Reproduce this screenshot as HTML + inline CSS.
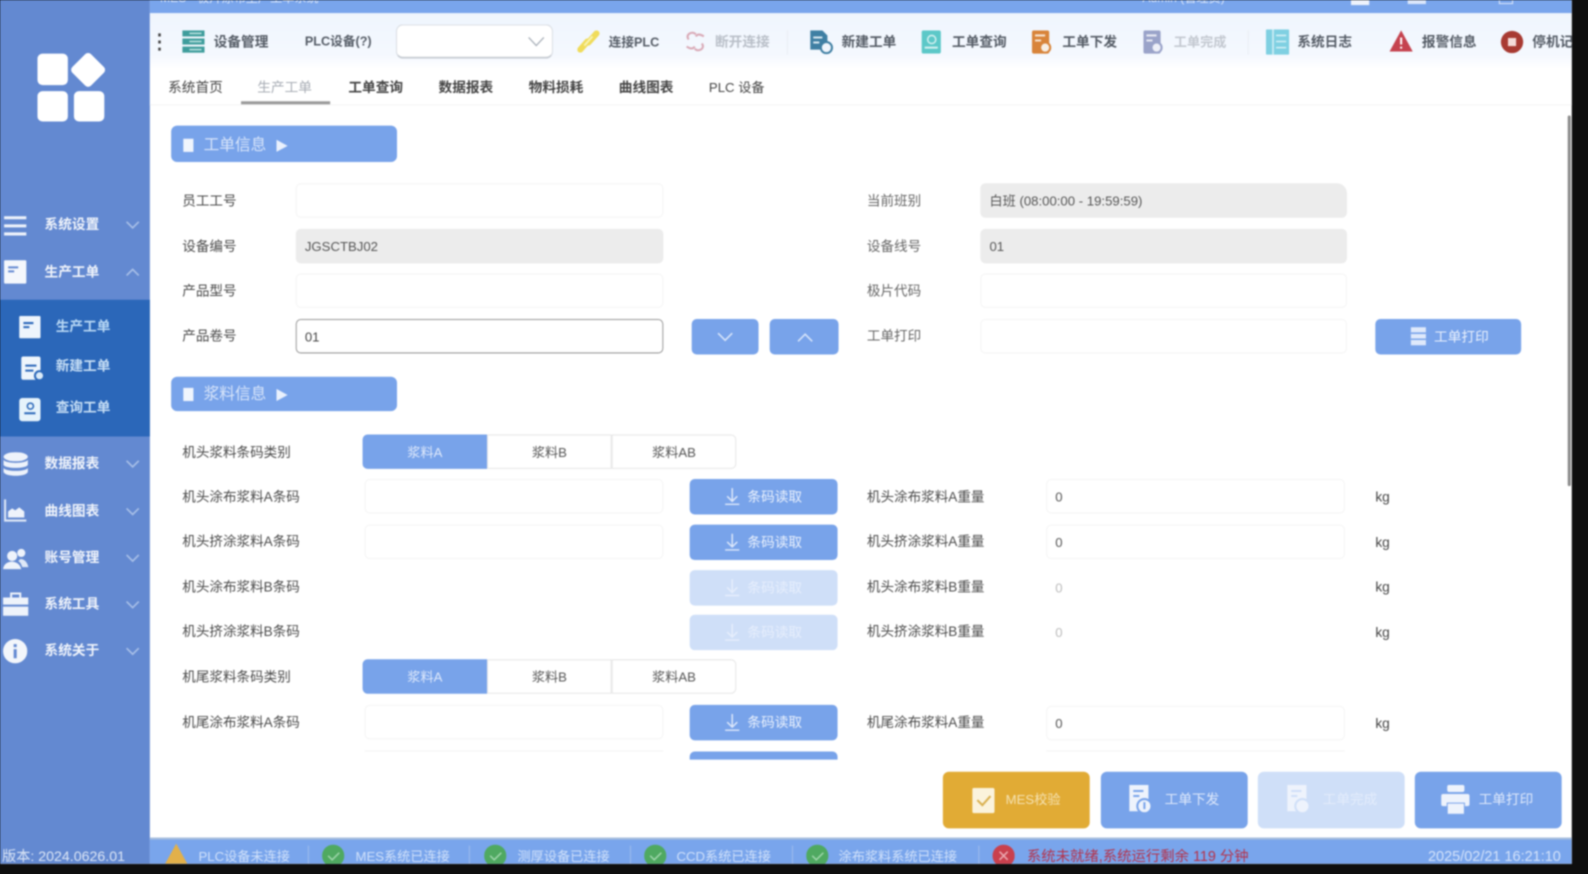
<!DOCTYPE html>
<html lang="zh"><head><meta charset="utf-8"><title>生产工单</title>
<style>
html,body{margin:0;padding:0;width:1588px;height:874px;overflow:hidden;background:#0e0e0e}
#s{position:absolute;left:0;top:0;width:1552px;height:853px;background:#fff;overflow:hidden;transform-origin:0 0;transform:scale(1.01275);font-family:"Liberation Sans","Noto Sans CJK SC",sans-serif;font-size:13.500px;color:#444;filter:blur(.75px)}
#s div,#s svg{position:absolute;box-sizing:border-box}
.t{white-space:nowrap;line-height:18px;height:18px}
.ip{border:1px solid #f4f4f4;border-radius:5px;background:#fff;height:34px;padding-left:8px;line-height:34px;color:#555;font-size:13px}
.g{background:#ececec;border-color:#ececec}
.b{background:#78a3ea;border-radius:5px;color:#eaf1fd;text-align:center;line-height:36px;height:35px}
.l{background:#cfdff8;color:#e6eefc}
.sg{height:34px;width:123px;border:1px solid #e6e6e6;text-align:center;line-height:34px;color:#555;background:#fff;font-size:13px}
.m{font-weight:700;color:#f0f4fb;font-size:13.500px}
.ar{fill:none;stroke:#a9c0e8;stroke-width:1.6}
.tb{font-weight:700;color:#555c66;font-size:13.500px}
.st{color:#cfe0fa;font-size:13px}
.bb{height:56px;width:145px;top:762px;border-radius:6px;background:#78a3ea;color:#dfe9fb}
.la{font-size:13.400px;color:#4a4a4a}
</style></head><body><div id="s">

<!-- sidebar -->
<div style="left:0;top:0;width:148px;height:853px;background:#6389d1"></div>
<div style="left:37px;top:53px;width:30px;height:31px;background:#fff;border-radius:5px"></div>
<div style="left:74px;top:56px;width:26px;height:26px;background:#fff;border-radius:4px;transform:rotate(45deg)"></div>
<div style="left:37px;top:90px;width:30px;height:30px;background:#fff;border-radius:5px"></div>
<div style="left:73px;top:90px;width:30px;height:30px;background:#fff;border-radius:5px"></div>

<div style="left:0;top:296px;width:148px;height:135px;background:#2b67b9"></div>

<svg style="left:4px;top:212px" width="24" height="22"><path d="M0 3h22M0 11h22M0 19h22" stroke="#eef3fb" stroke-width="3"/></svg>
<div class="t m" style="left:44px;top:213px">系统设置</div>
<svg style="left:124px;top:218px" width="14" height="9"><path class="ar" d="M1 1l6 6 6-6"/></svg>

<div style="left:4px;top:257px;width:22px;height:23px;background:#f4f7fc;border-radius:1px"></div>
<svg style="left:8px;top:262px" width="12" height="10"><path d="M0 2h10M0 6h6" stroke="#6389d1" stroke-width="2"/></svg>
<div class="t m" style="left:44px;top:260px">生产工单</div>
<svg style="left:124px;top:264px" width="14" height="9"><path class="ar" d="M1 8l6-6 6 6"/></svg>

<div style="left:19px;top:312px;width:21px;height:22px;background:#eef5fc;border-radius:1px"></div>
<svg style="left:23px;top:317px" width="12" height="10"><path d="M0 2h10M0 6h6" stroke="#2b67b9" stroke-width="2"/></svg>
<div class="t" style="left:55px;top:314px;color:#b8d8f5;font-weight:700">生产工单</div>

<div style="left:21px;top:352px;width:19px;height:23px;background:#eef5fc;border-radius:2px"></div>
<svg style="left:24px;top:356px" width="24" height="22"><path d="M1 5h11M1 10h8" stroke="#2b67b9" stroke-width="2"/><circle cx="15" cy="15" r="5.500" fill="#2b67b9"/><circle cx="15" cy="15" r="3.500" fill="#dcebf8"/></svg>
<div class="t" style="left:55px;top:353px;color:#c6def5;font-weight:700">新建工单</div>

<div style="left:19px;top:393px;width:21px;height:23px;background:#e6f3fb;border-radius:3px"></div>
<svg style="left:22px;top:396px" width="15" height="17"><circle cx="8" cy="5" r="3" fill="none" stroke="#2b67b9" stroke-width="1.500"/><path d="M2 12h11" stroke="#2b67b9" stroke-width="2"/></svg>
<div class="t" style="left:55px;top:394px;color:#c6def5;font-weight:700">查询工单</div>

<svg style="left:3px;top:446px" width="25" height="25"><ellipse cx="12.500" cy="5" rx="12" ry="4.500" fill="#eef3fb"/><path d="M.5 8c2 4 22 4 24 0v5c-2 4-22 4-24 0z" fill="#eef3fb"/><path d="M.5 16c2 4 22 4 24 0v4c-2 5-22 5-24 0z" fill="#eef3fb"/></svg>
<div class="t m" style="left:44px;top:449px">数据报表</div>
<svg style="left:124px;top:454px" width="14" height="9"><path class="ar" d="M1 1l6 6 6-6"/></svg>

<svg style="left:4px;top:493px" width="23" height="24"><path d="M1 0v21h21" fill="none" stroke="#dfe8f7" stroke-width="2"/><path d="M4 18v-6l4-3 3 2 4-3 5 4v6z" fill="#eef3fb"/></svg>
<div class="t m" style="left:44px;top:496px">曲线图表</div>
<svg style="left:124px;top:501px" width="14" height="9"><path class="ar" d="M1 1l6 6 6-6"/></svg>

<svg style="left:3px;top:540px" width="26" height="24"><circle cx="9" cy="9" r="5" fill="#eef3fb"/><circle cx="18" cy="6" r="4" fill="#eef3fb"/><path d="M0 22c1-10 16-10 18 0z" fill="#eef3fb"/><path d="M17 12c4 0 7 3 8 8h-6c-1-3-2-5-4-6z" fill="#dfe8f7"/></svg>
<div class="t m" style="left:44px;top:542px">账号管理</div>
<svg style="left:124px;top:547px" width="14" height="9"><path class="ar" d="M1 1l6 6 6-6"/></svg>

<svg style="left:3px;top:585px" width="25" height="24"><path d="M8 5V1h9v4" fill="none" stroke="#eef3fb" stroke-width="2"/><rect x="0" y="5" width="25" height="7" fill="#eef3fb"/><rect x="0" y="14" width="25" height="9" fill="#eef3fb"/></svg>
<div class="t m" style="left:44px;top:588px">系统工具</div>
<svg style="left:124px;top:593px" width="14" height="9"><path class="ar" d="M1 1l6 6 6-6"/></svg>

<svg style="left:3px;top:631px" width="24" height="24"><circle cx="12" cy="12" r="12" fill="#f3f6fb"/><path d="M12 5v3M12 10v9" stroke="#6389d1" stroke-width="3"/></svg>
<div class="t m" style="left:44px;top:634px">系统关于</div>
<svg style="left:124px;top:639px" width="14" height="9"><path class="ar" d="M1 1l6 6 6-6"/></svg>

<div class="t" style="left:2px;top:836px;font-size:14px;color:#dce6f6">版本: 2024.0626.01</div>

<!-- title bar -->
<div style="left:148px;top:0;width:1404px;height:13px;background:#79a5ec"></div>
<div class="t" style="left:158px;top:-11px;font-size:12px;color:#dde8fb">MES - 极片涂布生产工单系统</div>
<div class="t" style="left:1128px;top:-11px;font-size:12px;color:#dde8fb">Admin (管理员)</div>
<div style="left:1334px;top:0;width:18px;height:5px;background:#eef3fc"></div>
<div style="left:1390px;top:0;width:18px;height:4px;background:#dbe7fb"></div>
<div style="left:1480px;top:0;width:14px;height:4px;border:1px solid #dbe7fb;border-top:0"></div>

<!-- toolbar -->
<div style="left:148px;top:13px;width:1404px;height:55px;background:linear-gradient(#eff5fd,#f4f8fe 75%,#fff)"></div>
<svg style="left:155px;top:32px" width="5" height="19"><path d="M2.500 1v3M2.500 8v3M2.500 15v3" stroke="#444" stroke-width="2.500"/></svg>
<svg style="left:180px;top:30px" width="22" height="23"><rect width="22" height="6" fill="#3f9d9c"/><rect y="8" width="22" height="6" fill="#3f9d9c"/><rect y="16" width="22" height="6" fill="#3f9d9c"/><path d="M7 3h12M7 11h12M7 19h12" stroke="#bfe4e2" stroke-width="1.500"/></svg>
<div class="t tb" style="left:211px;top:33px">设备管理</div>
<div class="t tb" style="left:301px;top:32px;font-size:12.500px">PLC设备(?)</div>
<div style="left:391px;top:24px;width:155px;height:34px;border:1px solid #d9dde3;border-bottom:2px solid #c7ccd3;border-radius:7px;background:#fff"></div>
<svg style="left:521px;top:36px" width="17" height="11"><path d="M1 1l7.500 8L16 1" fill="none" stroke="#aab1ba" stroke-width="1.300"/></svg>
<svg style="left:570px;top:30px" width="23" height="22"><path d="M3 19l7-8M11 12l8-9" stroke="#f0dc5a" stroke-width="6" stroke-linecap="round"/><path d="M7 15l8-9" stroke="#f8f2b0" stroke-width="2"/></svg>
<div class="t tb" style="left:601px;top:33px;font-size:12.500px">连接PLC</div>
<svg style="left:676px;top:30px" width="21" height="22"><path d="M4 9c-4-5 4-9 7-5M17 13c4 5-4 9-7 5M2 16c3 2 6 3 8 0M19 6c-3-2-6-3-8 0" fill="none" stroke="#d9a9b6" stroke-width="2"/></svg>
<div class="t" style="left:706px;top:33px;font-size:13.500px;color:#b9bfc8;font-weight:700">断开连接</div>
<div style="left:777px;top:30px;width:1px;height:24px;background:#eaeef3"></div>
<svg style="left:800px;top:30px" width="24" height="24"><path d="M0 0h12l5 5v14H0z" fill="#3f7fa3"/><path d="M3 7h9M3 12h6" stroke="#d8e8f2" stroke-width="2"/><circle cx="16" cy="17" r="5.500" fill="#f0f5fc" stroke="#3f7fa3" stroke-width="2"/></svg>
<div class="t tb" style="left:831px;top:33px">新建工单</div>
<svg style="left:910px;top:30px" width="20" height="23"><rect width="19" height="23" rx="2" fill="#5cc8c8"/><circle cx="10" cy="9" r="4" fill="none" stroke="#d5f1f1" stroke-width="1.500"/><path d="M3 17h13" stroke="#d5f1f1" stroke-width="2"/></svg>
<div class="t tb" style="left:940px;top:33px">工单查询</div>
<svg style="left:1019px;top:30px" width="21" height="24"><rect width="17" height="23" rx="2" fill="#d8843a"/><path d="M3 5h10M3 10h6" stroke="#f7e3cf" stroke-width="2"/><circle cx="13" cy="17" r="5" fill="#f7efe6" stroke="#d8843a" stroke-width="2"/></svg>
<div class="t tb" style="left:1049px;top:33px">工单下发</div>
<svg style="left:1129px;top:30px" width="21" height="24"><rect width="17" height="23" rx="2" fill="#9aa3c9"/><path d="M3 5h10M3 10h6" stroke="#e8eaf4" stroke-width="2"/><circle cx="13" cy="17" r="5" fill="#eef0f8" stroke="#9aa3c9" stroke-width="2"/></svg>
<div class="t" style="left:1159px;top:33px;color:#c3c8d0;font-weight:700;font-size:13px">工单完成</div>
<div style="left:1232px;top:30px;width:1px;height:24px;background:#eaeef3"></div>
<svg style="left:1250px;top:29px" width="23" height="25"><rect width="23" height="25" rx="1" fill="#7fd0e2"/><path d="M7 0v25M10 6h10M10 12h10M10 18h10" stroke="#d6f0f6" stroke-width="1.500"/></svg>
<div class="t tb" style="left:1281px;top:33px">系统日志</div>
<svg style="left:1372px;top:30px" width="23" height="21"><path d="M11.500 0L23 21H0z" fill="#c5434f"/><path d="M11.500 7v7M11.500 16v2" stroke="#fff" stroke-width="2"/></svg>
<div class="t tb" style="left:1404px;top:33px">报警信息</div>
<svg style="left:1481px;top:29px" width="24" height="25"><circle cx="12" cy="12.500" r="11" fill="#a83a32"/><rect x="8" y="8.500" width="8" height="8" fill="#f4dbd8"/></svg>
<div class="t tb" style="left:1513px;top:33px">停机记录</div>

<!-- tabs -->
<div style="left:148px;top:68px;width:1404px;height:36px;background:#fff;border-bottom:1px solid #f3f3f3"></div>
<div class="t" style="left:166px;top:78px">系统首页</div>
<div class="t" style="left:254px;top:78px;color:#a8adb5">生产工单</div>
<div style="left:238px;top:100px;width:88px;height:2.500px;background:#9a9a9a"></div>
<div class="t" style="left:344px;top:78px;font-weight:700">工单查询</div>
<div class="t" style="left:433px;top:78px;font-weight:700">数据报表</div>
<div class="t" style="left:522px;top:78px;font-weight:700">物料损耗</div>
<div class="t" style="left:611px;top:78px;font-weight:700">曲线图表</div>
<div class="t" style="left:700px;top:78px;font-size:13px">PLC 设备</div>

<!-- scrollbar -->
<div style="left:1548px;top:114px;width:3px;height:366px;background:#8a8a8a;border-radius:2px"></div>

<!-- section 1 -->
<div style="left:169px;top:124px;width:223px;height:36px;background:#78a3ea;border-radius:6px"></div>
<div style="left:181px;top:137px;width:10px;height:13px;background:#f0f5fd"></div>
<div class="t" style="left:201px;top:135px;font-size:15.500px;color:#d8e5fa">工单信息</div>
<svg style="left:273px;top:138px" width="12" height="12"><path d="M0 0l11 6-11 6z" fill="#eaf1fd"/></svg>

<div class="t la" style="left:180px;top:190px">员工工号</div><div class="ip" style="left:292px;top:181px;width:363px"></div>
<div class="t la" style="left:180px;top:235px">设备编号</div><div class="ip g" style="left:292px;top:226px;width:363px">JGSCTBJ02</div>
<div class="t la" style="left:180px;top:279px">产品型号</div><div class="ip" style="left:292px;top:270px;width:363px"></div>
<div class="t la" style="left:180px;top:323px">产品卷号</div><div class="ip" style="left:292px;top:315px;width:363px;border-color:#9a9a9a;color:#444">01</div>
<div class="b" style="left:683px;top:315px;width:66px"></div>
<svg style="left:708px;top:328px" width="16" height="10"><path d="M1 1l7 7 7-7" fill="none" stroke="#d8e5fa" stroke-width="1.500"/></svg>
<div class="b" style="left:760px;top:315px;width:68px"></div>
<svg style="left:787px;top:328px" width="16" height="10"><path d="M1 9l7-7 7 7" fill="none" stroke="#d8e5fa" stroke-width="1.500"/></svg>

<div class="t la" style="left:856px;top:190px;color:#666">当前班别</div><div class="ip g" style="left:968px;top:181px;width:362px;border-top-right-radius:10px">白班 (08:00:00 - 19:59:59)</div>
<div class="t la" style="left:856px;top:235px;color:#666">设备线号</div><div class="ip g" style="left:968px;top:226px;width:362px">01</div>
<div class="t la" style="left:856px;top:279px;color:#666">极片代码</div><div class="ip" style="left:968px;top:270px;width:362px"></div>
<div class="t la" style="left:856px;top:323px;color:#666">工单打印</div><div class="ip" style="left:968px;top:315px;width:362px"></div>
<div class="b" style="left:1358px;top:315px;width:144px;padding-left:26px">工单打印</div>
<svg style="left:1393px;top:323px" width="15" height="18"><rect width="15" height="18" fill="#dfe9fb"/><path d="M0 6h15M0 12h15" stroke="#78a3ea" stroke-width="1.500"/></svg>

<!-- section 2 -->
<div style="left:169px;top:372px;width:223px;height:34px;background:#78a3ea;border-radius:6px"></div>
<div style="left:181px;top:383px;width:10px;height:13px;background:#f0f5fd"></div>
<div class="t" style="left:201px;top:381px;font-size:15.500px;color:#d8e5fa">浆料信息</div>
<svg style="left:273px;top:384px" width="12" height="12"><path d="M0 0l11 6-11 6z" fill="#eaf1fd"/></svg>

<div class="t la" style="left:180px;top:438px">机头浆料条码类别</div>
<div class="sg" style="left:358px;top:429px;background:#78a3ea;border-color:#78a3ea;color:#dfe9fb;border-radius:5px 0 0 5px">浆料A</div>
<div class="sg" style="left:481px;top:429px">浆料B</div>
<div class="sg" style="left:604px;top:429px;border-radius:0 5px 5px 0">浆料AB</div>

<div class="t la" style="left:180px;top:482px">机头涂布浆料A条码</div><div class="ip" style="left:360px;top:473px;width:295px"></div>
<div class="b" style="left:681px;top:473px;width:146px;padding-left:22px">条码读取</div>
<div class="t la" style="left:180px;top:526px">机头挤涂浆料A条码</div><div class="ip" style="left:360px;top:518px;width:295px"></div>
<div class="b" style="left:681px;top:518px;width:146px;padding-left:22px">条码读取</div>
<div class="t la" style="left:180px;top:571px">机头涂布浆料B条码</div>
<div class="b l" style="left:681px;top:563px;width:146px;padding-left:22px">条码读取</div>
<div class="t la" style="left:180px;top:615px">机头挤涂浆料B条码</div>
<div class="b l" style="left:681px;top:607px;width:146px;padding-left:22px">条码读取</div>

<div class="t la" style="left:180px;top:660px">机尾浆料条码类别</div>
<div class="sg" style="left:358px;top:651px;background:#78a3ea;border-color:#78a3ea;color:#dfe9fb;border-radius:5px 0 0 5px">浆料A</div>
<div class="sg" style="left:481px;top:651px">浆料B</div>
<div class="sg" style="left:604px;top:651px;border-radius:0 5px 5px 0">浆料AB</div>

<div class="t la" style="left:180px;top:705px">机尾涂布浆料A条码</div><div class="ip" style="left:360px;top:696px;width:295px"></div>
<div class="b" style="left:681px;top:696px;width:146px;padding-left:22px">条码读取</div>
<div style="left:360px;top:741px;width:295px;height:9px;border-top:1px solid #f4f4f4"></div>
<div style="left:681px;top:742px;width:146px;height:8px;background:#78a3ea;border-radius:5px 5px 0 0"></div>

<svg style="left:715px;top:481px" width="16" height="19"><path d="M8 1v13M3 9l5 5 5-5M1 17h14" fill="none" stroke="#dfe9fb" stroke-width="1.400"/></svg>
<svg style="left:715px;top:526px" width="16" height="19"><path d="M8 1v13M3 9l5 5 5-5M1 17h14" fill="none" stroke="#dfe9fb" stroke-width="1.400"/></svg>
<svg style="left:715px;top:571px" width="16" height="19"><path d="M8 1v13M3 9l5 5 5-5M1 17h14" fill="none" stroke="#e6eefc" stroke-width="1.400"/></svg>
<svg style="left:715px;top:615px" width="16" height="19"><path d="M8 1v13M3 9l5 5 5-5M1 17h14" fill="none" stroke="#e6eefc" stroke-width="1.400"/></svg>
<svg style="left:715px;top:704px" width="16" height="19"><path d="M8 1v13M3 9l5 5 5-5M1 17h14" fill="none" stroke="#dfe9fb" stroke-width="1.400"/></svg>

<div class="t la" style="left:856px;top:482px">机头涂布浆料A重量</div><div class="ip" style="left:1033px;top:473px;width:295px">0</div><div class="t" style="left:1358px;top:482px">kg</div>
<div class="t la" style="left:856px;top:526px">机头挤涂浆料A重量</div><div class="ip" style="left:1033px;top:518px;width:295px">0</div><div class="t" style="left:1358px;top:527px">kg</div>
<div class="t la" style="left:856px;top:571px">机头涂布浆料B重量</div><div class="ip" style="left:1033px;top:563px;width:295px;border-color:#fff;color:#bbb">0</div><div class="t" style="left:1358px;top:571px">kg</div>
<div class="t la" style="left:856px;top:615px">机头挤涂浆料B重量</div><div class="ip" style="left:1033px;top:607px;width:295px;border-color:#fff;color:#bbb">0</div><div class="t" style="left:1358px;top:616px">kg</div>
<div class="t la" style="left:856px;top:705px">机尾涂布浆料A重量</div><div class="ip" style="left:1033px;top:697px;width:295px">0</div><div class="t" style="left:1358px;top:706px">kg</div>
<div style="left:1033px;top:741px;width:295px;height:1px;background:#f4f4f4"></div>

<!-- bottom buttons -->
<div class="bb" style="left:931px;background:#e1ab35;color:#f7e6bd"></div>
<svg style="left:960px;top:778px" width="23" height="25"><rect width="22" height="25" rx="2" fill="#fbf3dc"/><path d="M5 12l5 5 8-9" fill="none" stroke="#d9b04f" stroke-width="2"/></svg>
<div class="t" style="left:993px;top:781px;color:#f5e2b2;font-size:13px">MES校验</div>
<div class="bb" style="left:1087px"></div>
<svg style="left:1115px;top:775px" width="25" height="30"><path d="M0 0h19v26H0z" fill="#eef3fc"/><path d="M4 6h10M4 11h6" stroke="#78a3ea" stroke-width="2"/><circle cx="15" cy="21" r="7" fill="#eef3fc" stroke="#78a3ea" stroke-width="2"/><path d="M15 17v7" stroke="#78a3ea" stroke-width="2"/></svg>
<div class="t" style="left:1150px;top:781px;color:#dfe9fb">工单下发</div>
<div class="bb" style="left:1242px;background:#cfdff8"></div>
<svg style="left:1271px;top:775px" width="25" height="30"><path d="M0 0h19v26H0z" fill="#eef3fc"/><path d="M4 6h10M4 11h6" stroke="#cfdff8" stroke-width="2"/><circle cx="15" cy="21" r="7" fill="#eef3fc" stroke="#cfdff8" stroke-width="2"/></svg>
<div class="t" style="left:1306px;top:781px;color:#e3ecfb">工单完成</div>
<div class="bb" style="left:1397px"></div>
<svg style="left:1423px;top:775px" width="29" height="29"><rect x="6" y="0" width="17" height="7" rx="2" fill="#eef3fc"/><rect x="0" y="9" width="28" height="12" rx="2" fill="#eef3fc"/><rect x="6" y="18" width="17" height="11" fill="#eef3fc" stroke="#78a3ea"/></svg>
<div class="t" style="left:1460px;top:781px;color:#dfe9fb">工单打印</div>

<!-- status -->
<div style="left:148px;top:827px;width:1404px;height:26px;background:#79a5ec;border-top:2px solid #a7bede"></div>
<svg style="left:163px;top:833px" width="22" height="20"><path d="M11 0L22 20H0z" fill="#e2b04a"/></svg>
<div class="t st" style="left:196px;top:837px">PLC设备未连接</div>
<div style="left:304px;top:835px;width:1px;height:18px;background:#9fbcec"></div>
<svg style="left:318px;top:834px" width="22" height="22"><circle cx="11" cy="11" r="11" fill="#4fa961"/><path d="M6 11l4 4 7-7" fill="none" stroke="#9fd6ab" stroke-width="1.500"/></svg>
<div class="t st" style="left:351px;top:837px">MES系统已连接</div>
<div style="left:463px;top:835px;width:1px;height:18px;background:#9fbcec"></div>
<svg style="left:478px;top:834px" width="22" height="22"><circle cx="11" cy="11" r="11" fill="#4fa961"/><path d="M6 11l4 4 7-7" fill="none" stroke="#9fd6ab" stroke-width="1.500"/></svg>
<div class="t st" style="left:511px;top:837px">测厚设备已连接</div>
<div style="left:622px;top:835px;width:1px;height:18px;background:#9fbcec"></div>
<svg style="left:636px;top:834px" width="22" height="22"><circle cx="11" cy="11" r="11" fill="#4fa961"/><path d="M6 11l4 4 7-7" fill="none" stroke="#9fd6ab" stroke-width="1.500"/></svg>
<div class="t st" style="left:668px;top:837px">CCD系统已连接</div>
<div style="left:782px;top:835px;width:1px;height:18px;background:#9fbcec"></div>
<svg style="left:796px;top:834px" width="22" height="22"><circle cx="11" cy="11" r="11" fill="#4fa961"/><path d="M6 11l4 4 7-7" fill="none" stroke="#9fd6ab" stroke-width="1.500"/></svg>
<div class="t st" style="left:828px;top:837px">涂布浆料系统已连接</div>
<div style="left:966px;top:835px;width:1px;height:18px;background:#9fbcec"></div>
<svg style="left:980px;top:834px" width="22" height="22"><circle cx="11" cy="11" r="11" fill="#c9404d"/><path d="M7 7l8 8M15 7l-8 8" stroke="#eba9b0" stroke-width="1.500"/></svg>
<div class="t" style="left:1014px;top:837px;color:#b5324a;font-size:14.200px">系统未就绪,系统运行剩余 119 分钟</div>
<div class="t st" style="left:1410px;top:837px;color:#d3e2fa;font-size:14.300px">2025/02/21 16:21:10</div>
</div></body></html>
